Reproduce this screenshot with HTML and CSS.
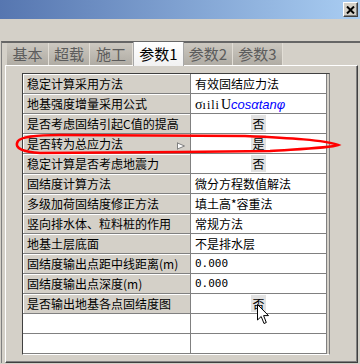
FILE: index.html
```html
<!DOCTYPE html>
<html lang="zh-CN">
  <head>
    <meta charset="utf-8" />
    <title>参数1</title>
    <link rel="stylesheet" href="styles.css">
  </head>

  <body>
    <div class="titlebar">
      <div class="close">
        <svg width="9" height="8" viewBox="0 0 9 8"><path d="M1 0.5 L8 7.5 M8 0.5 L1 7.5" stroke="#000" stroke-width="2"/></svg>
      </div>
    </div>

    <div class="frame">
      <div class="tabs">
        <div class="tab" style="width:42px">基本</div>
        <div class="tab" style="width:41px">超载</div>
        <div class="tab" style="width:43px">施工</div>
        <div class="tab active" style="width:51px">参数1</div>
        <div class="tab" style="width:49px">参数2</div>
        <div class="tab" style="width:50px">参数3</div>
      </div>

      <div class="panel">
        <div class="grid">
          <div class="row">
            <div class="key">稳定计算采用方法</div>
            <div class="val">有效固结应力法</div>
          </div>
          <div class="row">
            <div class="key">地基强度增量采用公式</div>
            <div class="val formula"><span class="sym">σ</span><span class="thin">ıili</span><span class="sym">U</span><span class="blue">cosαtanφ</span></div>
          </div>
          <div class="row">
            <div class="key">是否考虑固结引起C值的提高</div>
            <div class="val center"><span class="hl">否</span></div>
          </div>
          <div class="row">
            <div class="key flagged">是否转为总应力法
              <svg class="flag" width="10" height="8" viewBox="0 0 10 8"><path d="M1.5 0.5 L1.5 7.5 M1.5 1 L8.5 4 L1.5 7 Z" fill="#fff" stroke="#808080"/></svg>
            </div>
            <div class="val center"><span class="hl">是</span></div>
          </div>
          <div class="row">
            <div class="key">稳定计算是否考虑地震力</div>
            <div class="val center"><span class="hl">否</span></div>
          </div>
          <div class="row">
            <div class="key">固结度计算方法</div>
            <div class="val">微分方程数值解法</div>
          </div>
          <div class="row">
            <div class="key">多级加荷固结度修正方法</div>
            <div class="val">填土高*容重法</div>
          </div>
          <div class="row">
            <div class="key">竖向排水体、粒料桩的作用</div>
            <div class="val">常规方法</div>
          </div>
          <div class="row">
            <div class="key">地基土层底面</div>
            <div class="val">不是排水层</div>
          </div>
          <div class="row">
            <div class="key">固结度输出点距中线距离(m)</div>
            <div class="val num">0.000</div>
          </div>
          <div class="row">
            <div class="key">固结度输出点深度(m)</div>
            <div class="val num">0.000</div>
          </div>
          <div class="row">
            <div class="key">是否输出地基各点固结度图</div>
            <div class="val center"><span class="hl">否</span></div>
          </div>
          <div class="row empty">
            <div class="key"></div>
            <div class="val"></div>
          </div>
          <div class="row empty">
            <div class="key"></div>
            <div class="val"></div>
          </div>
        </div>
      </div>
    </div>

    <!-- hand-drawn red mark around the row -->
    <svg class="mark" width="360" height="364" viewBox="0 0 360 364">
      <path d="M18 141 C22 136 40 135 60 135 L245 136 C290 138 325 140 338 145 C330 148 300 149 270 151 L180 152 L40 153 C25 152 13 149 18 141 Z" fill="none" stroke="#ff0000" stroke-width="2.5"/>
    </svg>

    <svg class="cursor" width="13" height="21" viewBox="0 0 13 21">
      <path d="M0.5 0.5 L0.5 16 L4.2 12.5 L7 19.5 L9.3 18.5 L6.6 11.6 L11.5 11.6 Z" fill="#fff" stroke="#000"/>
    </svg>
  </body>
</html>
```

FILE: styles.css
```css
* {
  box-sizing: border-box;
}

body {
  margin: 0;
  width: 360px;
  height: 364px;
  overflow: hidden;
  position: relative;
  background-color: #d4d0c8;
  color: #000;
  font-family: "Noto Sans CJK SC", "Noto Sans", sans-serif;
  font-size: 12px;
}

.titlebar {
  height: 19px;
  background: linear-gradient(to right, #5676b0, #a9cdf2);
  display: flex;
  justify-content: flex-end;
  padding: 2px 2px 0 0;
}

.close {
  width: 15px;
  height: 15px;
  background-color: #d4d0c8;
  border: 1px solid;
  border-color: #fff #404040 #404040 #fff;
  box-shadow: inset -1px -1px #808080;
  display: flex;
  align-items: center;
  justify-content: center;
}

.frame {
  margin: 22px 0 0 1px;
  border-top: 2px solid #666;
  border-left: 1px solid #808080;
  padding: 0 2px 0 3px;
}

.tabs {
  display: flex;
  height: 22px;
  margin-left: 2px;
}

.tab {
  height: 22px;
  text-align: center;
  font-size: 15px;
  line-height: 22px;
  color: #5c5c5c;
  background: linear-gradient(#ccc8c0, #b0aca4);
  border-right: 1px solid #e2ded6;
}

.tab.active {
  position: relative;
  z-index: 1;
  height: 24px;
  margin-top: -1px;
  line-height: 24px;
  color: #000;
  background: linear-gradient(#ffffff, #f2f2f2);
  border-left: 1px solid #a8a8a8;
  border-right: 1px solid #a8a8a8;
}

.panel {
  height: 298px;
  border: 1px solid;
  border-color: #fff #404040 #404040 #fff;
  box-shadow: inset -1px -1px #808080;
  padding: 7px 0 0 16px;
}

.grid {
  width: 308px;
  height: 282px;
  background-color: #d4d0c8;
  border: 1px solid;
  border-color: #404040 #808080 #fff #404040;
}

.row {
  display: flex;
  width: 304px;
  height: 20px;
}

.key {
  width: 168px;
  height: 20px;
  background-color: #d4d0c8;
  border-right: 1px solid #808080;
  border-bottom: 1px solid #808080;
  box-shadow: inset 1px 1px #fff;
  padding-left: 4px;
  line-height: 19px;
  white-space: nowrap;
}

.key.flagged {
  display: flex;
  justify-content: space-between;
  align-items: center;
  padding-right: 4px;
}

.flag {
  margin-top: 5px;
}

.val {
  width: 136px;
  height: 20px;
  background-color: #fff;
  border-right: 1px solid #808080;
  border-bottom: 1px solid #808080;
  padding-left: 4px;
  line-height: 19px;
  white-space: nowrap;
}

.val.center {
  text-align: center;
  padding-left: 0;
}

.hl {
  background-color: #e2e2e2;
  padding: 0 1px;
}

.num {
  font-family: "DejaVu Sans Mono", monospace;
  font-size: 11px;
}

.formula .sym {
  font-family: "Liberation Serif", serif;
  font-size: 14px;
}

.formula .thin {
  font-family: "Liberation Serif", serif;
  font-size: 12px;
  letter-spacing: 1px;
  margin-right: 1px;
}

.formula .blue {
  color: #0000ff;
  font-family: "Liberation Sans", sans-serif;
  font-style: italic;
  font-size: 13px;
}

.row.empty .key {
  background-color: #fff;
  box-shadow: none;
}

.mark {
  position: absolute;
  left: 0;
  top: 0;
  pointer-events: none;
}

.cursor {
  position: absolute;
  left: 257px;
  top: 304px;
}
```
